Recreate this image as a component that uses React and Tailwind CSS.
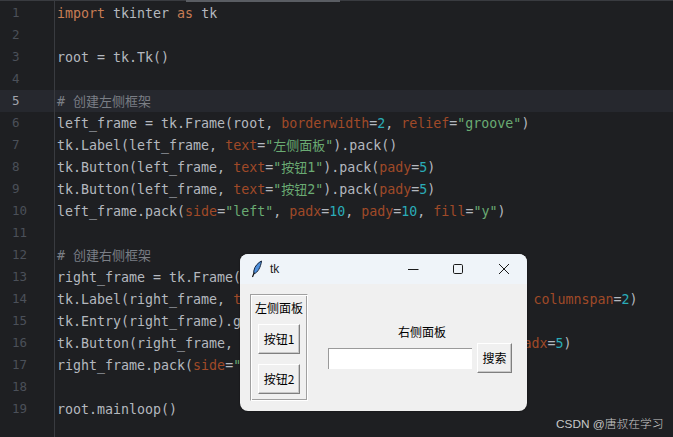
import React from 'react';

const kw = 'text-[#c77d55]';
const id = 'text-[#b4b8bf]';
const param = 'text-[#a04a28]';
const str = 'text-[#6aab73]';
const num = 'text-[#2aacb8]';
const cmt = 'text-[#7a7e85]';

// [text, colour] runs, one array per editor line
const lines = [
  [['import', kw], [' tkinter ', id], ['as', kw], [' tk', id]],
  [],
  [['root = tk.Tk()', id]],
  [],
  [['# 创建左侧框架', cmt]],
  [['left_frame = tk.Frame(root, ', id], ['borderwidth', param], ['=', id], ['2', num], [', ', id], ['relief', param], ['=', id], ['"groove"', str], [')', id]],
  [['tk.Label(left_frame, ', id], ['text', param], ['=', id], ['"左侧面板"', str], [').pack()', id]],
  [['tk.Button(left_frame, ', id], ['text', param], ['=', id], ['"按钮1"', str], [').pack(', id], ['pady', param], ['=', id], ['5', num], [')', id]],
  [['tk.Button(left_frame, ', id], ['text', param], ['=', id], ['"按钮2"', str], [').pack(', id], ['pady', param], ['=', id], ['5', num], [')', id]],
  [['left_frame.pack(', id], ['side', param], ['=', id], ['"left"', str], [', ', id], ['padx', param], ['=', id], ['10', num], [', ', id], ['pady', param], ['=', id], ['10', num], [', ', id], ['fill', param], ['=', id], ['"y"', str], [')', id]],
  [],
  [['# 创建右侧框架', cmt]],
  [['right_frame = tk.Frame(root)', id]],
  [['tk.Label(right_frame, ', id], ['text', param], ['=', id], ['"右侧面板"', str], [').grid(', id], ['row', param], ['=', id], ['0', num], [', ', id], ['column', param], ['=', id], ['0', num], [', ', id], ['columnspan', param], ['=', id], ['2', num], [')', id]],
  [['tk.Entry(right_frame).grid(', id], ['row', param], ['=', id], ['1', num], [', ', id], ['column', param], ['=', id], ['0', num], [')', id]],
  [['tk.Button(right_frame, ', id], ['text', param], ['=', id], ['"搜索"', str], [').grid(', id], ['row', param], ['=', id], ['1', num], [', ', id], ['column', param], ['=', id], ['1', num], [', ', id], ['padx', param], ['=', id], ['5', num], [')', id]],
  [['right_frame.pack(', id], ['side', param], ['=', id], ['"right"', str], [')', id]],
  [],
  [['root.mainloop()', id]],
];

// chinese runs sit a little narrower than the mono text around them
const Run = ({ text, color }) => (
  <span className={color}>
    {text.split(/([\u4e00-\u9fff]+)/).map((part, i) =>
      i % 2 ? <span key={i} className="text-[13px]">{part}</span> : part
    )}
  </span>
);

const TkButton = ({ label, className }) => (
  <button className={`flex items-center justify-center bg-[#f0f0f0] border border-t-white border-l-white border-r-[#7f7f7f] border-b-[#7f7f7f] shadow-[inset_-1px_-1px_0_#c8c8c8] text-[12px] text-black ${className}`}>
    {label}
  </button>
);

const TkWindow = () => (
  <div className="absolute left-[240px] top-[254px] w-[287px] h-[157px] rounded-[8px] overflow-hidden bg-[#f0f0f0] flex flex-col shadow-[0_0_2px_#00000080] font-['Noto_Sans_CJK_SC',sans-serif]">
    <div className="h-[30px] bg-[#eff4f9] flex items-center shrink-0">
      <svg width="12" height="18" viewBox="0 0 12 18" className="ml-[11px]">
        <path d="M10.500 1C7.500 2.500 3.500 6 2.800 11c-.2 1.300 0 2.200.6 2.700C6.500 12.500 9.800 7.500 10.500 1z" fill="#4d8fdc" stroke="#14243c" strokeWidth="1" />
        <path d="M3.200 12.500 1.500 17" stroke="#111" strokeWidth="1.200" fill="none" />
      </svg>
      <span className="ml-[7px] text-[12px] text-[#1a1a1a] font-['Liberation_Sans',sans-serif]">tk</span>
      <svg width="102" height="14" viewBox="0 0 102 14" fill="none" stroke="#1a1a1a" strokeWidth="1" className="ml-auto mr-[17px]">
        <path d="M0 7.500h10.500" />
        <rect x="45.500" y="2.500" width="9" height="9" rx="1.200" />
        <path d="M91 2l10 10M101 2 91 12" />
      </svg>
    </div>
    <div className="flex flex-1 min-h-0">
      <div className="ml-[10px] mt-[10px] w-[58px] h-[107px] border border-t-[#a0a0a0] border-l-[#a0a0a0] border-r-white border-b-white flex flex-col items-center shadow-[inset_1px_1px_0_#fff,inset_-1px_-1px_0_#a0a0a0]">
        <div className="text-[12px] leading-[14px] mt-[6px] text-black whitespace-nowrap">左侧面板</div>
        <TkButton label="按钮1" className="w-[42px] h-[30px] mt-[9px]" />
        <TkButton label="按钮2" className="w-[42px] h-[30px] mt-[10px]" />
      </div>
      <div className="ml-[20px] mt-[41px] flex flex-col w-[184px]">
        <div className="text-[12px] leading-[14px] text-black text-center w-[188px] whitespace-nowrap">右侧面板</div>
        <div className="flex items-start mt-[4px]">
          <div className="w-[144px] h-[21px] mt-[5px] bg-white border-t border-l border-[#9a9a9a]" />
          <TkButton label="搜索" className="w-[35px] h-[30px] ml-[5px]" />
        </div>
      </div>
    </div>
  </div>
);

export default function App() {
  return (
    <div className="relative w-[673px] h-[437px] overflow-hidden bg-[#1e1f22]">
      <div className="flex h-full">
        <div className="w-[55px] shrink-0 border-r border-[#393b40] pt-[2px] text-[12.500px] font-['DejaVu_Sans_Mono',monospace]">
          {lines.map((_, i) => (
            <div key={i} className={`h-[22px] leading-[22px] pl-[12px] ${i === 4 ? 'text-[#a1a3ab] bg-[#26282e]' : 'text-[#4b5059]'}`}>{i + 1}</div>
          ))}
        </div>
        <div className="flex-1 min-w-0 pt-[2px] font-['DejaVu_Sans_Mono','Noto_Sans_CJK_SC',monospace] text-[13.300px]">
          {lines.map((runs, i) => (
            <div key={i} className={`h-[22px] leading-[24px] pl-[2px] whitespace-pre ${i === 4 ? 'bg-[#26282e]' : ''}`}>
              {runs.map(([t, c], j) => <Run key={j} text={t} color={c} />)}
            </div>
          ))}
        </div>
      </div>
      {/* tab strip line and scroll thumb along the top */}
      <div className="absolute left-0 top-0 w-full h-[1px] bg-[#393b40]" />
      <div className="absolute left-[186px] top-0 w-[154px] h-[2px] bg-[#5a5d63]" />
      <TkWindow />
      <div className="absolute left-[556px] top-[415px] text-[11.800px] leading-[18px] font-light text-[#c8c8c8] font-['Liberation_Sans','Noto_Sans_CJK_SC',sans-serif] whitespace-nowrap">CSDN @唐叔在学习</div>
    </div>
  );
}
